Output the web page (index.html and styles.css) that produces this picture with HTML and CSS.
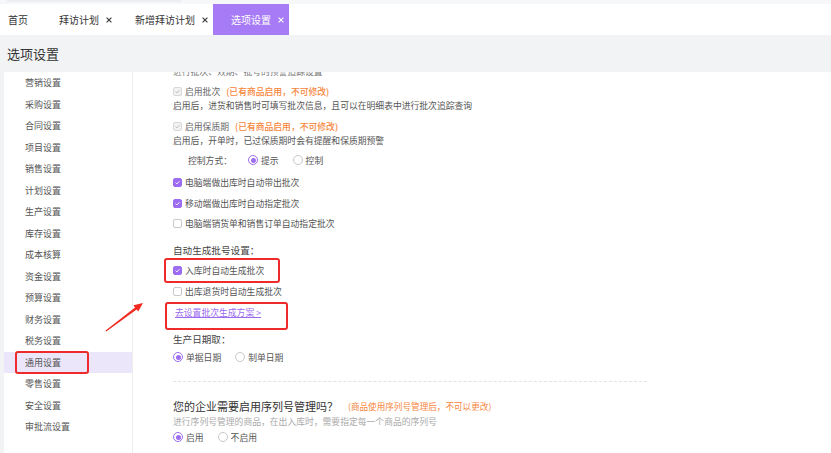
FILE: index.html
```html
<!DOCTYPE html>
<html lang="zh-CN">
<head>
<meta charset="utf-8">
<title>选项设置</title>
<link rel="stylesheet" href="styles.css">
</head>
<body>
<div class="topstrip"><div class="thumb"></div></div>
<nav class="tabs">
  <div class="tab home">首页</div>
  <div class="tab">拜访计划<svg class="x" viewBox="0 0 6 6"><path d="M0.6 0.6L5.4 5.4M5.4 0.6L0.6 5.4"/></svg></div>
  <div class="tab">新增拜访计划<svg class="x" viewBox="0 0 6 6"><path d="M0.6 0.6L5.4 5.4M5.4 0.6L0.6 5.4"/></svg></div>
  <div class="tab active">选项设置<svg class="x" viewBox="0 0 6 6"><path d="M0.6 0.6L5.4 5.4M5.4 0.6L0.6 5.4"/></svg></div>
</nav>
<header class="page-head">选项设置</header>
<div class="layout">
  <aside class="side">
    <div class="item">营销设置</div>
    <div class="item">采购设置</div>
    <div class="item">合同设置</div>
    <div class="item">项目设置</div>
    <div class="item">销售设置</div>
    <div class="item">计划设置</div>
    <div class="item">生产设置</div>
    <div class="item">库存设置</div>
    <div class="item">成本核算</div>
    <div class="item">资金设置</div>
    <div class="item">预算设置</div>
    <div class="item">财务设置</div>
    <div class="item">税务设置</div>
    <div class="item current"><span class="mark-side">通用设置</span></div>
    <div class="item">零售设置</div>
    <div class="item">安全设置</div>
    <div class="item">审批流设置</div>
  </aside>
  <main class="main">
    <div class="inner">
      <div class="row partial">进行批次、效期、批号的预警追踪设置</div>
      <div class="row mt6"><span class="cb dis"><svg viewBox="0 0 10 10"><path d="M2.3 5.1L4.2 7L7.8 3.2"/></svg></span><span class="lbl-dis">启用批次</span><span class="warn">(已有商品启用，不可修改)</span></div>
      <div class="row">启用后，进货和销售时可填写批次信息，且可以在明细表中进行批次追踪查询</div>
      <div class="row mt7"><span class="cb dis"><svg viewBox="0 0 10 10"><path d="M2.3 5.1L4.2 7L7.8 3.2"/></svg></span><span class="lbl-dis">启用保质期</span><span class="warn">(已有商品启用，不可修改)</span></div>
      <div class="row">启用后，开单时，已过保质期时会有提醒和保质期预警</div>
      <div class="row mt6 indent"><span class="ctrl-label">控制方式：</span><span class="opt"><span class="radio on"></span>提示</span><span class="opt"><span class="radio"></span>控制</span></div>
      <div class="row mt8"><span class="cb on"><svg viewBox="0 0 10 10"><path d="M2.3 5.1L4.2 7L7.8 3.2"/></svg></span>电脑端做出库时自动带出批次</div>
      <div class="row mt7"><span class="cb on"><svg viewBox="0 0 10 10"><path d="M2.3 5.1L4.2 7L7.8 3.2"/></svg></span>移动端做出库时自动指定批次</div>
      <div class="row mt6"><span class="cb"></span>电脑端销货单和销售订单自动指定批次</div>
      <div class="sub mt12">自动生成批号设置：</div>
      <div class="mark box1"><div class="row"><span class="cb on"><svg viewBox="0 0 10 10"><path d="M2.3 5.1L4.2 7L7.8 3.2"/></svg></span>入库时自动生成批次</div></div>
      <div class="row mt1"><span class="cb"></span>出库退货时自动生成批次</div>
      <div class="mark box2 mt4"><div class="row"><span class="link">去设置批次生成方案 &gt;</span></div></div>
      <div class="sub sub-sm mt2">生产日期取：</div>
      <div class="row mt4"><span class="opt"><span class="radio on"></span>单据日期</span><span class="opt"><span class="radio"></span>制单日期</span></div>
      <div class="dashed"></div>
      <div class="q-title"><span>您的企业需要启用序列号管理吗？</span><span class="warn warn-sm">(商品使用序列号管理后，不可以更改)</span></div>
      <div class="row hint">进行序列号管理的商品，在出入库时，需要指定每一个商品的序列号</div>
      <div class="row mt3"><span class="opt"><span class="radio on"></span>启用</span><span class="opt"><span class="radio"></span>不启用</span></div>
    </div>
  </main>
</div>
<svg class="arrow" viewBox="0 0 50 40" width="50" height="40"><polygon points="5.6,32.6 35.05,9.39 33.42,7.24 43,5 38.24,13.62 36.61,11.47 6.3,33.4"/></svg>
</body>
</html>
```
FILE: styles.css
```css
* { box-sizing: border-box; }
html, body { margin: 0; padding: 0; }
body {
  width: 831px;
  height: 453px;
  overflow: hidden;
  background: #f2f3f5;
  font-family: "Noto Sans CJK SC", "Noto Sans", sans-serif;
  color: #555;
  position: relative;
}
.topstrip {
  height: 4px;
  background: #f6f7f9;
  padding-left: 7px;
}
.thumb {
  width: 174px;
  height: 2px;
  background: #eceef1;
}
.tabs {
  height: 31px;
  background: #fff;
  display: flex;
  align-items: stretch;
}
.tab {
  display: flex;
  align-items: center;
  gap: 7px;
  padding: 0 5px 0 18px;
  font-size: 10px;
  color: #333;
}
.tab.home { padding-left: 8px; width: 41px; }
.tab.active { background: #a77bf5; color: #fff; width: 76px; }
.x { width: 6px; height: 6px; stroke: #333; stroke-width: 1.1; fill: none; }
.tab.active .x { stroke: #fff; }
.page-head {
  height: 37px;
  padding-left: 7px;
  display: flex;
  align-items: center;
  font-size: 13px;
  color: #333;
  background: #f2f3f5;
}
.layout {
  display: flex;
  height: 381px;
  padding-left: 4px;
}
.side {
  width: 129px;
  background: #fff;
  border-right: 1px solid #eee;
  flex: none;
}
.item {
  height: 21.5px;
  display: flex;
  align-items: center;
  padding-left: 21px;
  font-size: 9px;
  color: #555;
}
.item.current {
  background: #ece6fb;
  padding-left: 11px;
}
.mark-side {
  display: flex;
  align-items: center;
  width: 74px;
  height: 23px;
  padding-left: 8px;
  border: 2px solid #ee2a2a;
  border-radius: 3px;
}
.main {
  flex: 1;
  background: #fff;
  overflow: hidden;
}
.inner {
  margin-top: -8px;
  padding-left: 40px;
}
.row {
  display: flex;
  align-items: center;
  height: 14px;
  font-size: 8.8px;
  color: #555;
  white-space: nowrap;
}
.partial { color: #777; }
.mt1 { margin-top: 1px; }
.mt2 { margin-top: 2px; }
.mt3 { margin-top: 3px; }
.mt4 { margin-top: 4px; }
.mt6 { margin-top: 6px; }
.mt7 { margin-top: 7px; }
.mt8 { margin-top: 8px; }
.mt12 { margin-top: 12px; }
.cb {
  width: 9px;
  height: 9px;
  border: 1px solid #c9c9c9;
  border-radius: 2px;
  background: #fff;
  margin-right: 3px;
  display: inline-flex;
  flex: none;
}
.cb svg { width: 100%; height: 100%; fill: none; stroke-width: 1.3; stroke: #fff; }
.cb.on { background: #9c6df2; border-color: #9c6df2; }
.cb.dis { background: #f2f2f2; border-color: #d8d8d8; }
.cb.dis svg { stroke: #b5b5b5; }
.lbl-dis { color: #666; }
.warn {
  color: #f6853a;
  margin-left: 6px;
  font-weight: 500;
}
.indent { padding-left: 15px; }
.ctrl-label { width: 60px; }
.opt {
  display: inline-flex;
  align-items: center;
  margin-right: 14px;
}
.radio {
  width: 10px;
  height: 10px;
  border-radius: 50%;
  border: 1px solid #c9c9c9;
  margin-right: 3px;
  display: inline-flex;
  align-items: center;
  justify-content: center;
  flex: none;
}
.radio.on { border-color: #9c6df2; }
.radio.on::after {
  content: "";
  width: 5px;
  height: 5px;
  border-radius: 50%;
  background: #9c6df2;
}
.sub {
  height: 16px;
  display: flex;
  align-items: center;
  font-size: 9.6px;
  color: #444;
}
.sub-sm { height: 14px; }
.mark {
  border: 2px solid #ee2a2a;
  border-radius: 3px;
}
.box1 {
  margin-left: -9px;
  width: 116px;
  height: 25px;
  padding-left: 7px;
  display: flex;
  align-items: center;
}
.box2 {
  margin-left: -8px;
  width: 123px;
  height: 28px;
  padding: 1px 0 0 8px;
}
.link {
  color: #9b6cf0;
  text-decoration: underline;
}
.dashed {
  margin-top: 17px;
  width: 474px;
  border-top: 1px dashed #dde3e6;
}
.q-title {
  margin-top: 15px;
  height: 18px;
  display: flex;
  align-items: center;
  font-size: 11px;
  color: #333;
}
.warn-sm { font-size: 8.6px; margin-left: 10px; font-weight: 400; }
.hint { height: 12px; color: #aaa; }
.arrow {
  position: absolute;
  left: 100px;
  top: 298px;
  fill: #f02a20;
}
```
